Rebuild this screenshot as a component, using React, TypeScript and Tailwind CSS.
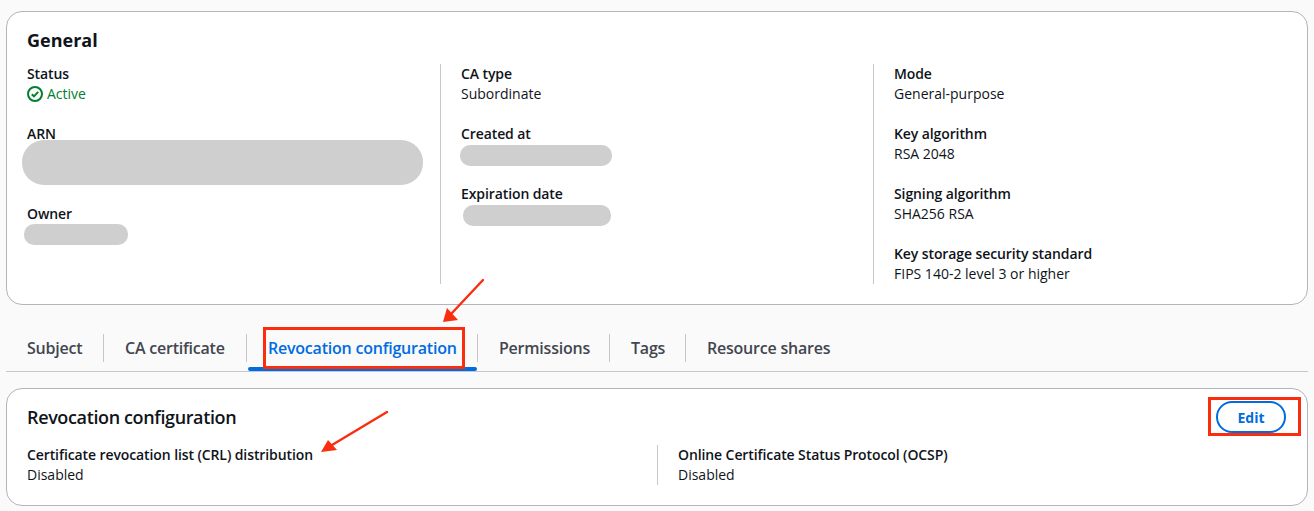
const font = "font-['Open_Sans','Noto_Sans',sans-serif]";

type Field = {
  label: string;
  value?: string;
  status?: boolean;
  blob?: string;
  tall?: boolean;
};

const columns: { className: string; fields: Field[] }[] = [
  {
    className: "w-[433px] pl-[20px]",
    fields: [
      { label: "Status", status: true },
      { label: "ARN", tall: true, blob: "left-[-5px] top-[16px] h-[45px] w-[401px] rounded-[22px]" },
      { label: "Owner", blob: "left-[-3px] top-[20px] h-[21px] w-[104px] rounded-[10px]" },
    ],
  },
  {
    className: "w-[433px] border-l border-[#c6c6cd] pl-[20px]",
    fields: [
      { label: "CA type", value: "Subordinate" },
      { label: "Created at", blob: "left-[-1px] top-[21px] h-[21px] w-[152px] rounded-[10px]" },
      { label: "Expiration date", blob: "left-[2px] top-[21px] h-[21px] w-[148px] rounded-[10px]" },
    ],
  },
  {
    className: "flex-1 border-l border-[#c6c6cd] pl-[20px]",
    fields: [
      { label: "Mode", value: "General-purpose" },
      { label: "Key algorithm", value: "RSA 2048" },
      { label: "Signing algorithm", value: "SHA256 RSA" },
      { label: "Key storage security standard", value: "FIPS 140-2 level 3 or higher" },
    ],
  },
];

const tabs = [
  { label: "Subject", className: "w-[98px] pl-[21px]" },
  { label: "CA certificate", className: "w-[143px] pl-[21px]" },
  { label: "Revocation configuration", className: "w-[231px] pl-[21px]", active: true },
  { label: "Permissions", className: "w-[132px] pl-[21px]" },
  { label: "Tags", className: "w-[76px] pl-[21px]" },
  { label: "Resource shares", className: "w-[170px] pl-[21px]", last: true },
];

function StatusIcon() {
  return (
    <svg viewBox="0 0 16 16" className="h-4 w-4 shrink-0" fill="none" stroke="#00802f" strokeWidth="2">
      <circle cx="8" cy="8" r="7" />
      <path d="M4.8 8.2 7 10.4 11.2 5.8" />
    </svg>
  );
}

function FieldBlock({ field }: { field: Field }) {
  return (
    <div className={`relative text-[14px] leading-5 text-[#0f141a] ${field.tall ? "h-[80px]" : "h-[60px]"}`}>
      <div className="font-semibold tracking-[-0.1px]">{field.label}</div>
      {field.status && (
        <div className="flex items-center gap-[4px] text-[#00802f]">
          <StatusIcon />
          <span>Active</span>
        </div>
      )}
      {field.value && <div>{field.value}</div>}
      {field.blob && <div className={`absolute bg-[#cfcfcf] ${field.blob}`} />}
    </div>
  );
}

function Arrow({ className, line, head, w, h }: { className: string; line: string; head: string; w: number; h: number }) {
  return (
    <svg className={`absolute ${className}`} viewBox={`0 0 ${w} ${h}`} fill="none">
      <path d={line} stroke="#fa2d0f" strokeWidth="2.4" strokeLinecap="round" />
      <polygon points={head} fill="#fa2d0f" />
    </svg>
  );
}

export default function App() {
  return (
    <div className={`relative h-[511px] w-[1314px] overflow-hidden bg-[#fafafa] px-[6px] pt-[11px] ${font}`}>
      <div className="h-[294px] rounded-[16px] border border-[#b4b4bb] bg-white">
        <h2 className="pl-[20px] pt-[14px] text-[18px] font-bold leading-[28px] text-[#0f141a]">General</h2>
        <div className="mt-[10px] flex h-[220px]">
          {columns.map((column) => (
            <div key={column.fields[0].label} className={`h-full ${column.className}`}>
              {column.fields.map((field) => (
                <FieldBlock key={field.label} field={field} />
              ))}
            </div>
          ))}
        </div>
      </div>

      <div className="mt-[29px] flex h-[38px] items-start border-b border-[#c6c6cd]">
        {tabs.map((tab) => (
          <div key={tab.label} className={`relative h-[37px] ${tab.className}`}>
            <div className={`flex h-[28px] items-center border-[#c6c6cd] text-[16px] font-semibold tracking-[-0.22px] ${tab.last ? "" : "border-r"} ${tab.active ? "text-[#006ce0]" : "text-[#424650]"}`}>
              {tab.label}
            </div>
            {tab.active && <div className="absolute bottom-0 left-[1px] right-[1px] h-[4px] rounded-[2px] bg-[#006ce0]" />}
          </div>
        ))}
      </div>

      <div className="mt-[16px] h-[118px] rounded-[16px] border border-[#b4b4bb] bg-white">
        <div className="flex items-start justify-between pl-[20px] pr-[21px] pt-[12px]">
          <h2 className="pt-[2px] text-[18px] font-semibold leading-[28px] tracking-[-0.37px] text-[#0f141a]">Revocation configuration</h2>
          <button className="h-[32px] w-[70px] rounded-full border-2 border-[#006ce0] text-[14px] font-bold text-[#006ce0]">
            Edit
          </button>
        </div>
        <div className="mt-[12px] flex h-[40px] text-[14px] leading-5 text-[#0f141a]">
          <div className="w-[650px] pl-[20px]">
            <div className="font-semibold tracking-[-0.1px]">Certificate revocation list (CRL) distribution</div>
            <div>Disabled</div>
          </div>
          <div className="flex-1 border-l border-[#c6c6cd] pl-[20px]">
            <div className="font-semibold tracking-[-0.1px]">Online Certificate Status Protocol (OCSP)</div>
            <div>Disabled</div>
          </div>
        </div>
      </div>

      <div className="absolute left-[263px] top-[327px] h-[42px] w-[202px] border-[3px] border-[#fa2d0f]" />
      <div className="absolute left-[1208px] top-[397px] h-[39px] w-[93px] border-[3px] border-[#fa2d0f]" />

      <Arrow className="left-[440px] top-[275px] h-[50px] w-[48px]" w={48} h={50} line="M43 5 12 38" head="3,47 7,33 18,45" />
      <Arrow className="left-[318px] top-[408px] h-[47px] w-[72px]" w={72} h={47} line="M69 4 14 37" head="3,44 10,32 19,42" />
    </div>
  );
}
